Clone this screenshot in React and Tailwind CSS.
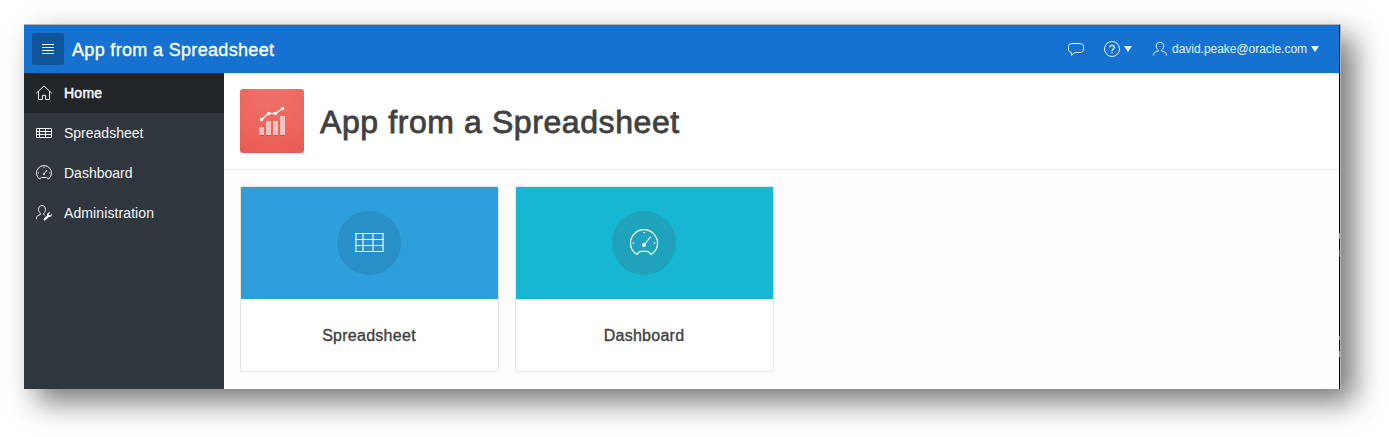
import React from "react";

const stroke = { fill: "none", stroke: "currentColor", strokeWidth: 1 };

function Home() {
  return (
    <svg className="size-4" viewBox="0 0 16 16" {...stroke}>
      <path d="M.3 8.2 8 .9l7.7 7.3M2.500 6.300v8.200h3.900v-4.200h3.200v4.200h3.900V6.300" />
    </svg>
  );
}

function TableSmall() {
  return (
    <svg className="size-4" viewBox="0 0 16 16" {...stroke}>
      <path d="M.5 3.500h15v9H.5zM0 6.500h16M0 9.500h16M3.500 3v10M9.500 3v10" />
    </svg>
  );
}

function GaugeSmall() {
  return (
    <svg className="size-4" viewBox="0 0 16 16" {...stroke}>
      <path d="M3.700 14.200A7.500 7.500 0 1 1 12.300 14.200Q11.500 12.500 10.500 12.500h-5Q4.500 12.500 3.700 14.200Z" />
      <path d="M8 2v1M2 8h1M13 8h1M8 9l3-4" />
      <circle cx="8" cy="9" r="1" fill="currentColor" stroke="none" />
    </svg>
  );
}

function Admin() {
  return (
    <svg className="size-4" viewBox="0 0 16 16" {...stroke}>
      <path d="M4.400 8.200C3 7 2.500 5.800 2.500 4.400 2.500 2 4 .5 6 .5s3.500 1.500 3.500 3.900c0 1.500-.6 2.900-1.800 3.800M4.400 8.200v1.300L1.700 10.700C.8 11.200.5 12 .5 14M7.700 8.200v1.300l1 .6" />
      <path d="m8.700 14.400 3.700-3.500" strokeWidth="2.200" strokeLinecap="round" />
      <path d="M14.500 7.300 12.700 9l.2 1.300 1.300.2 1.700-1.700c.3 2.200-1.100 3.400-3.100 3.100l-1.700-1.700c-.2-2 1.300-3.300 3.400-2.900Z" fill="currentColor" stroke="none" />
    </svg>
  );
}

function Chat() {
  return (
    <svg className="size-4" viewBox="0 0 16 16" {...stroke}>
      <path d="M3.500 11.500C1.500 11.200.5 10 .5 8V5.500c0-2 1.500-3 3.500-3h8c2 0 3.500 1 3.500 3V8c0 2.200-1.500 3.500-3.500 3.500H6.800L3.500 14.300Z" />
    </svg>
  );
}

function Help() {
  return (
    <svg className="size-4" viewBox="0 0 16 16" {...stroke}>
      <circle cx="8" cy="8" r="7.500" />
      <path d="M6 6.300c0-2.600 4.200-2.500 4.200.1C10.200 8 8 8 8 10M8 11v1.300" strokeWidth="1.300" />
    </svg>
  );
}

function User() {
  return (
    <svg className="size-4" viewBox="0 0 16 16" {...stroke}>
      <path d="M6.300 8.900C4.900 7.900 4.300 6.700 4.300 5c0-2.400 1.500-3.700 3.700-3.700S11.700 2.600 11.700 5c0 1.700-.6 2.900-2 3.900v1l3 1.100c1.300.5 1.700 1.500 1.700 3.500M6.300 8.900v1l-3 1.100c-1.300.5-1.700 1.500-1.700 3.500" />
    </svg>
  );
}

function Caret() {
  return (
    <svg className="h-[6px] w-2" viewBox="0 0 8 6">
      <path d="M0 0h8L4 6Z" fill="currentColor" />
    </svg>
  );
}

function AppIcon() {
  return (
    <svg className="size-16" viewBox="0 0 64 64">
      <path d="M19 38h5v8h-5zM26 32h5v14h-5zM33 32h5v14h-5zM40 27h5v19h-5z" fill="#fff" fillOpacity=".6" />
      <path d="M19 46.500h5M26 46.500h5M33 46.500h5M40 46.500h5" stroke="#b84542" strokeOpacity=".6" />
      <path d="m21.500 30.500 7-6h7l7-5" fill="none" stroke="#fff" strokeWidth="1.300" />
      <g fill="#fff">
        <circle cx="21.500" cy="30.500" r="1.700" />
        <circle cx="28.500" cy="24.500" r="1.700" />
        <circle cx="35.500" cy="24.500" r="1.700" />
        <circle cx="42.500" cy="19.500" r="1.700" />
      </g>
    </svg>
  );
}

function TableCardIcon() {
  return (
    <svg className="size-8" viewBox="0 0 32 32" fill="none" stroke="#fff">
      <path d="M3 6v19M10 6v19M20 6v19M30 6v19" strokeWidth="2" strokeOpacity=".55" />
      <path d="M2 6.500h29M2 12.500h29M2 18.500h29M2 24.500h29" />
    </svg>
  );
}

function GaugeCardIcon() {
  return (
    <svg className="size-8" viewBox="0 0 32 32" fill="none" stroke="#fff" strokeWidth="1.200">
      <path d="M9 27.500C5 25 2.500 21 2.500 16.200a13.500 13.500 0 0 1 27 0C29.500 21 27 25 23 27.500l-2-2.300q-.8-.8-2-.8h-6q-1.200 0-2 .8Z" />
      <path d="M15 5.500h2M5.500 15v2M26.500 15v2M16 18l6.800-8.500" />
      <circle cx="16" cy="18" r="2" fill="#fff" stroke="none" />
    </svg>
  );
}

const navItems = [
  { label: "Home", icon: Home, row: "bg-[#212527]", text: "tracking-[0.25px] [-webkit-text-stroke:0.5px_#f5f6f7]" },
  { label: "Spreadsheet", icon: TableSmall, row: "", text: "" },
  { label: "Dashboard", icon: GaugeSmall, row: "", text: "" },
  { label: "Administration", icon: Admin, row: "", text: "tracking-[0.1px]" },
];

const cards = [
  { label: "Spreadsheet", icon: TableCardIcon, bg: "bg-[#2f9fdb]", circle: "bg-[#298fc7]" },
  { label: "Dashboard", icon: GaugeCardIcon, bg: "bg-[#17b6d2]", circle: "bg-[#1fa3bc]" },
];

export default function App() {
  return (
    <div className="h-[437px] w-full overflow-hidden bg-white pt-6 pl-6 font-['Liberation_Sans',Arial,sans-serif]">
      <div className="flex h-[365px] w-[1317px] border-t border-r border-t-[#a9afb3] border-r-[#b5b5b5] shadow-[13px_13px_28px_rgba(0,0,0,0.54)]">
        <div className="flex min-h-0 flex-1 flex-col">
          <header className="flex h-12 shrink-0 items-center bg-[#1672d0] pr-5 pl-2 text-white">
            <button className="flex size-8 items-center justify-center rounded-[2px] bg-[#10549a]">
              <svg className="size-4" viewBox="0 0 16 16" stroke="#fff">
                <path d="M2 3.500h12M2 6.500h12M2 9.500h12M2 12.500h12" />
              </svg>
            </button>
            <span className="ml-2 pt-0.5 text-[18px] tracking-[0.33px] [-webkit-text-stroke:0.35px_white]">App from a Spreadsheet</span>
            <div className="ml-auto flex items-center text-[12px] text-[#eaf3fc]">
              <Chat />
              <div className="ml-5 flex items-center gap-1">
                <Help />
                <Caret />
              </div>
              <div className="ml-5 flex items-center gap-1">
                <User />
                <span className="tracking-[-0.03px]">david.peake@oracle.com</span>
                <Caret />
              </div>
            </div>
          </header>
          <div className="flex min-h-0 flex-1">
            <nav className="w-[200px] shrink-0 bg-[#30363d] text-[14px] text-[#f5f6f7]">
              {navItems.map(({ label, icon: Icon, row, text }) => (
                <a key={label} className={`flex h-10 items-center gap-3 pl-3 ${row}`}>
                  <Icon />
                  <span className={text}>{label}</span>
                </a>
              ))}
            </nav>
            <main className="flex-1 bg-[#fdfdfd]">
              <div className="flex h-[97px] items-center gap-4 border-b border-[#e8e8e8] bg-white pl-4 text-[#404040]">
                <div className="size-16 overflow-hidden rounded-[3px] bg-radial-[circle_at_50%_0%] from-[#f0736c] to-[#e95b54]">
                  <AppIcon />
                </div>
                <h1 className="pt-0.5 text-[32px] tracking-[0.59px] [-webkit-text-stroke:0.8px_#404040]">App from a Spreadsheet</h1>
              </div>
              <div className="flex gap-4 pt-4 pl-4">
                {cards.map(({ label, icon: Icon, bg, circle }) => (
                  <div key={label} className="h-[186px] w-[259px] overflow-hidden rounded-[2px] border border-[#e6e6e6] bg-white">
                    <div className={`flex h-28 items-center justify-center pr-px ${bg}`}>
                      <div className={`flex size-16 items-center justify-center rounded-full ${circle}`}>
                        <Icon />
                      </div>
                    </div>
                    <div className="flex h-[72px] items-center justify-center pt-0.5 pr-px text-[16px] tracking-[0.27px] text-[#404040] [-webkit-text-stroke:0.35px_#404040]">
                      {label}
                    </div>
                  </div>
                ))}
              </div>
            </main>
          </div>
        </div>
        <div className="flex w-px flex-col bg-black pt-52">
          <span className="h-1.5 bg-[#7d9298]" />
          <span className="mt-[11px] h-[7px] bg-[#b02443]" />
          <span className="mt-[79px] h-1 bg-[#64808a]" />
          <span className="mt-[11px] h-1.5 bg-[#8a8a86]" />
        </div>
      </div>
    </div>
  );
}
